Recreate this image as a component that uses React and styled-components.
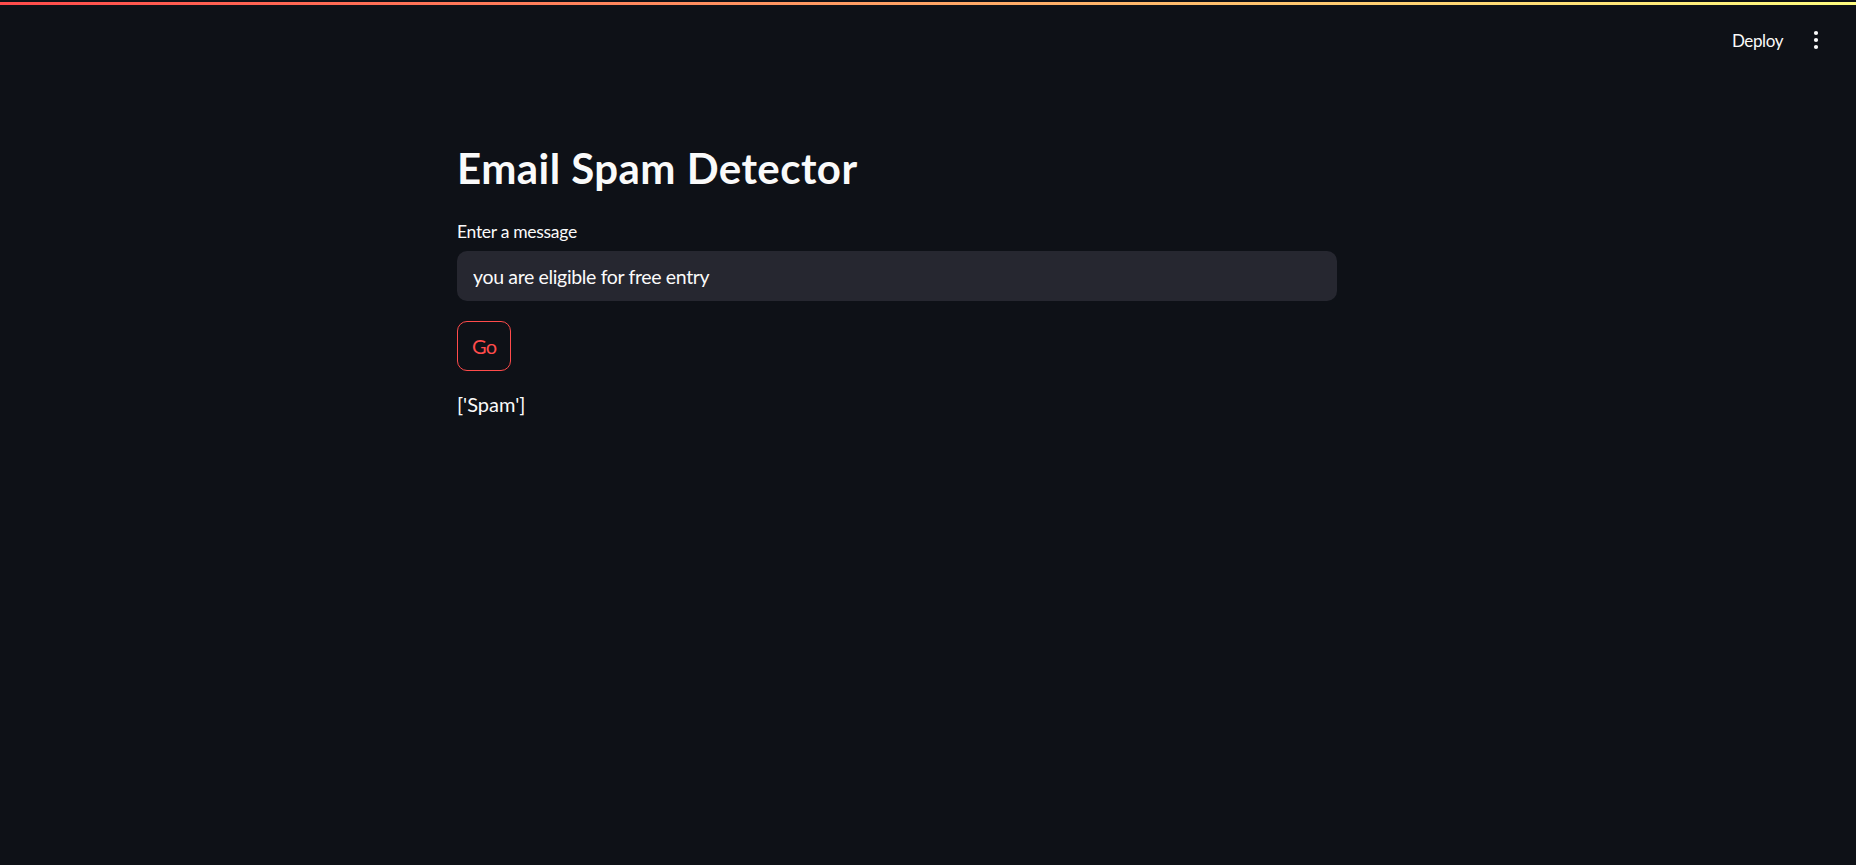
import React, { useState } from 'react';
import styled, { createGlobalStyle } from 'styled-components';

const GlobalStyle = createGlobalStyle`
  html, body {
    margin: 0;
    padding: 0;
    background: #0e1117;
  }
  * {
    box-sizing: border-box;
  }
`

const Page = styled.div`
  min-height: 100vh;
  background: #0e1117;
  color: #fafafa;
  font-family: Lato, "Noto Sans", sans-serif;
`

const Decoration = styled.div`
  margin-top: 2px;
  height: 3px;
  background-image: linear-gradient(90deg, #ff4b4b, #fffd80);
`

const Header = styled.header`
  height: 70px;
  display: flex;
  justify-content: flex-end;
  align-items: center;
  padding-right: 20px;
  gap: 3px;
`

const HeaderButton = styled.button`
  background: transparent;
  border: none;
  color: #fafafa;
  font-family: inherit;
  font-size: 17px;
  letter-spacing: -0.4px;
  padding: 8px 10px;
  cursor: pointer;
`

const IconButton = styled.button`
  width: 40px;
  height: 40px;
  display: flex;
  align-items: center;
  justify-content: center;
  background: transparent;
  border: none;
  color: #fafafa;
  padding: 0;
  cursor: pointer;
`

const Main = styled.main`
  padding: 68px 0 0 457px;
`

const Block = styled.div`
  width: 880px;
  display: flex;
  flex-direction: column;
  align-items: flex-start;
`

const Title = styled.h1`
  margin: 0;
  font-size: 42px;
  font-weight: 700;
  line-height: 1.2;
  letter-spacing: 0.45px;
`

const Label = styled.label`
  margin-top: 25px;
  font-size: 17.5px;
  line-height: 1.6;
  letter-spacing: -0.3px;
`

const TextInput = styled.input`
  margin-top: 5px;
  width: 100%;
  height: 50px;
  border: none;
  outline: none;
  border-radius: 10px;
  background: #262730;
  color: #fafafa;
  font-family: inherit;
  font-size: 19.5px;
  letter-spacing: -0.35px;
  padding: 0 16px;
`

const Button = styled.button`
  margin-top: 20px;
  height: 50px;
  padding: 5px 14px;
  border-radius: 10px;
  border: 1px solid ${p => (p.$active ? '#ff4b4b' : 'rgba(250, 250, 250, 0.2)')};
  background: #0e1117;
  color: ${p => (p.$active ? '#ff4b4b' : '#fafafa')};
  font-family: inherit;
  font-size: 20px;
  letter-spacing: -0.8px;
  cursor: pointer;
`

const Result = styled.p`
  margin: 17px 0 0;
  font-size: 20px;
  line-height: 1.6;
`

const KebabIcon = () => (
  <svg width="28" height="28" viewBox="0 0 24 24" fill="currentColor">
    <circle cx="12" cy="6" r="1.8" />
    <circle cx="12" cy="12" r="1.8" />
    <circle cx="12" cy="18" r="1.8" />
  </svg>
)

const App = () => {
  const [message, setMessage] = useState('you are eligible for free entry');

  return (
    <Page>
      <GlobalStyle />
      <Decoration />
      <Header>
        <HeaderButton>Deploy</HeaderButton>
        <IconButton aria-label="Main menu">
          <KebabIcon />
        </IconButton>
      </Header>
      <Main>
        <Block>
          <Title>Email Spam Detector</Title>
          <Label htmlFor="msg">Enter a message</Label>
          <TextInput id="msg" value={message} onChange={e => setMessage(e.target.value)} />
          <Button $active>Go</Button>
          <Result>['Spam']</Result>
        </Block>
      </Main>
    </Page>
  )
}

export default App;
